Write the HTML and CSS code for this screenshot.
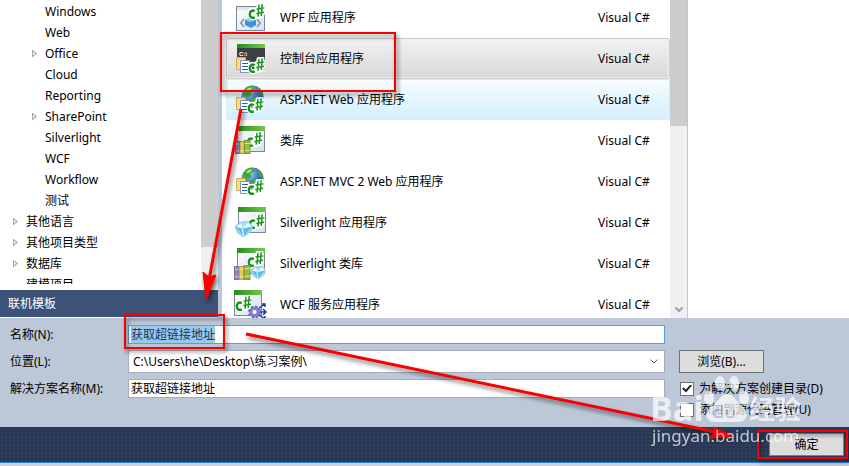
FILE: index.html
```html
<!DOCTYPE html>
<html lang="zh-CN">
<head>
    <meta charset="UTF-8">
    <meta name="viewport" content="width=device-width, initial-scale=1.0">
    <title>新建项目</title>
    <link rel="stylesheet" href="styles.css">
</head>
<body>
    <!-- shared icon parts -->
    <svg class="defs" width="0" height="0" aria-hidden="true">
        <defs>
            <linearGradient id="green" x1="0" x2="1"><stop offset="0" stop-color="#2a8c1c"/><stop offset="1" stop-color="#74c94a"/></linearGradient>
            <linearGradient id="pane" x1="0" y1="0" x2="1" y2="1"><stop offset="0" stop-color="#fff"/><stop offset="1" stop-color="#d5e0f0"/></linearGradient>
            <radialGradient id="earth" cx=".35" cy=".3" r=".8"><stop offset="0" stop-color="#a9d8f5"/><stop offset=".5" stop-color="#3a7cc8"/><stop offset="1" stop-color="#143c86"/></radialGradient>
            <symbol id="window" viewBox="0 0 28 26">
                <rect x=".5" y=".5" width="27" height="25" fill="url(#pane)" stroke="#7b8794"/>
                <rect width="28" height="5" fill="url(#green)"/>
            </symbol>
            <symbol id="csharp" viewBox="0 0 15 15">
                <g fill="none" stroke="#fff" stroke-width="4" stroke-linecap="round" stroke-linejoin="round"><path d="M6 7C3 5 1.500 7 1.500 9.500C1.500 13 4 13.500 6 12.500M9.500 2L8.500 12M12.500 1.500L11.500 11.500M7.500 5.500L14 4.500M7.500 9.500L14 8.500"/></g>
                <g fill="none" stroke="#16941b"><path stroke-width="2.200" d="M6 7.300C3.500 5.800 1.600 7.500 1.600 10C1.600 13 4 13.600 6 12.600"/><path stroke-width="1.300" d="M9.700 1.500L8.900 12M12.500 1L11.700 11.500M7.600 5.300L14.500 4.300M7.300 9.200L14.200 8.200"/></g>
            </symbol>
            <symbol id="pages" viewBox="0 0 14 16">
                <path d="M.5 .5H9.500V12.500H.5Z" fill="#f9dc86" stroke="#d5a943"/>
                <path d="M4.500 3.500H13.500V15.500H4.500Z" fill="#fff" stroke="#8094b8"/>
                <path d="M6 6.500H12M6 9.500H12M6 12.500H12" stroke="#3159a5"/>
            </symbol>
            <symbol id="books" viewBox="0 0 16 14">
                <rect x=".5" y="1.500" width="4" height="12" fill="#9a86c5" stroke="#7d6ba8"/>
                <rect x="5" y="1.500" width="4" height="12" fill="#eac95c" stroke="#c39d35"/>
                <rect x="9.500" y=".5" width="5.500" height="13" fill="#9bbc43" stroke="#769a30"/>
                <path d="M1 4H4M1 11H4M5 4H9M5 11H9M10 3.500H15M10 10.500H15" stroke="#fff" stroke-opacity=".6"/>
            </symbol>
            <symbol id="globe" viewBox="0 0 22 22">
                <circle cx="11" cy="11" r="10.500" fill="url(#earth)"/>
                <path d="M2 6C5 1 9 0 12 1L13 4L9 6L10 9L6 12L3 10Z M15 2C19 4 21 7 21 11L18 9L16 6Z M11 12L16 13L17 17L13 21L10 17Z" fill="#43a637"/>
                <path d="M5 5C7 2 10 2 11 3L7 6Z" fill="#a8e78b"/>
            </symbol>
            <symbol id="gem" viewBox="0 0 16 14">
                <path d="M1 5L5 1.500L12 1L15.500 5L14 9L8 13.500L3 10Z" fill="#a9ddf2" stroke="#8bcbe6"/>
                <path d="M1.500 5L7 6.500L15 5L8 13Z" fill="#60badf"/>
                <path d="M2 5L6 2L7 6.500ZM7 6.500L12 1.500L15 5Z" fill="#e6f8ff"/>
                <path d="M7 6.500L8 13" stroke="#e6f8ff"/>
            </symbol>
        </defs>
    </svg>

    <main class="dialog">
        <section class="browser">
            <aside class="sidebar">
                <div class="tree-pane">
                    <ul class="tree">
                        <li class="child">Windows</li>
                        <li class="child">Web</li>
                        <li class="child closed">Office</li>
                        <li class="child">Cloud</li>
                        <li class="child">Reporting</li>
                        <li class="child closed">SharePoint</li>
                        <li class="child">Silverlight</li>
                        <li class="child">WCF</li>
                        <li class="child">Workflow</li>
                        <li class="child">测试</li>
                        <li class="closed">其他语言</li>
                        <li class="closed">其他项目类型</li>
                        <li class="closed">数据库</li>
                        <li>建模项目</li>
                    </ul>
                    <div class="scrollbar"><div class="thumb tree-thumb"></div></div>
                </div>
                <div class="online">联机模板</div>
            </aside>

            <div class="list-pane">
                <ul class="templates">
                    <li>
                        <svg class="icon" viewBox="0 0 32 32" aria-hidden="true">
                            <rect x="1.500" y="4.500" width="28" height="24" fill="url(#pane)" stroke="#7b8794"/>
                            <rect x="2" y="5" width="27" height="3" fill="#dfe4e8"/>
                            <path d="M9 17L6 21L9 25M22 17L25 21L22 25" fill="none" stroke="#8fa0b0" stroke-width="2"/>
                            <path d="M10 18L15 16L21 18V23L16 26L10 23Z" fill="#3e91db"/><path d="M10 18L15 16L21 18L15 20Z" fill="#91c9f3"/>
                            <use href="#csharp" x="13" y="1" width="17" height="17"/>
                        </svg>
                        <span class="name">WPF 应用程序</span><span class="lang">Visual C#</span>
                    </li>
                    <li class="selected">
                        <svg class="icon" viewBox="0 0 32 32" aria-hidden="true">
                            <rect x="2" y="2" width="28" height="24" fill="#3c4043"/>
                            <rect x="2" y="1" width="28" height="4" fill="url(#green)"/>
                            <text x="4" y="13" class="prompt">C:\</text>
                            <use href="#pages" x="1" y="14" width="14" height="16"/>
                            <use href="#csharp" x="13" y="14" width="17" height="17"/>
                        </svg>
                        <span class="name">控制台应用程序</span><span class="lang">Visual C#</span>
                    </li>
                    <li class="hover">
                        <svg class="icon" viewBox="0 0 32 32" aria-hidden="true">
                            <use href="#globe" x="6" y="1" width="23" height="23"/>
                            <use href="#pages" x="1" y="13" width="14" height="16"/>
                            <use href="#csharp" x="12" y="13" width="17" height="17"/>
                        </svg>
                        <span class="name">ASP.NET Web 应用程序</span><span class="lang">Visual C#</span>
                    </li>
                    <li>
                        <svg class="icon" viewBox="0 0 32 32" aria-hidden="true">
                            <use href="#window" x="2" y="1" width="28" height="26"/>
                            <use href="#csharp" x="11" y="6" width="17" height="17"/>
                            <use href="#books" x="0" y="15" width="16" height="14"/>
                        </svg>
                        <span class="name">类库</span><span class="lang">Visual C#</span>
                    </li>
                    <li>
                        <svg class="icon" viewBox="0 0 32 32" aria-hidden="true">
                            <use href="#globe" x="6" y="1" width="23" height="23"/>
                            <use href="#pages" x="1" y="12" width="14" height="16"/>
                            <use href="#csharp" x="12" y="13" width="17" height="17"/>
                        </svg>
                        <span class="name">ASP.NET MVC 2 Web 应用程序</span><span class="lang">Visual C#</span>
                    </li>
                    <li>
                        <svg class="icon" viewBox="0 0 32 32" aria-hidden="true">
                            <use href="#window" x="3" y="0" width="28" height="26"/>
                            <use href="#csharp" x="13" y="6" width="17" height="17"/>
                            <use href="#gem" x="-1" y="13" width="19" height="18"/>
                        </svg>
                        <span class="name">Silverlight 应用程序</span><span class="lang">Visual C#</span>
                    </li>
                    <li>
                        <svg class="icon" viewBox="0 0 32 32" aria-hidden="true">
                            <use href="#window" x="2" y="0" width="28" height="26"/>
                            <use href="#csharp" x="12" y="3" width="17" height="17"/>
                            <use href="#books" x="-1" y="17" width="17" height="15"/>
                            <use href="#gem" x="15" y="17" width="16" height="15"/>
                        </svg>
                        <span class="name">Silverlight 类库</span><span class="lang">Visual C#</span>
                    </li>
                    <li>
                        <svg class="icon" viewBox="0 0 32 32" aria-hidden="true">
                            <use href="#window" x="-1" y="1" width="28" height="26"/>
                            <use href="#csharp" x="0" y="6" width="17" height="17"/>
                            <path d="M20 22L30 15M22 23H31M21 24L30 30M27 15H30V18M28 20L31 23L28 26M27 30H30V27" fill="none" stroke="#233a9e" stroke-width="1.500"/>
                            <circle cx="19.500" cy="23" r="5.500" fill="#8583cf" stroke="#6d6abb" stroke-width="2" stroke-dasharray="2.500 1.800"/>
                            <circle cx="19.500" cy="23" r="4.500" fill="#8583cf"/><circle cx="19.500" cy="23" r="2" fill="#fff"/>
                        </svg>
                        <span class="name">WCF 服务应用程序</span><span class="lang">Visual C#</span>
                    </li>
                </ul>
                <div class="scrollbar">
                    <div class="thumb list-thumb"></div>
                    <svg class="chevron" viewBox="0 0 8 5" aria-hidden="true"><path d="M.5 .5L4 4L7.500 .5"/></svg>
                </div>
            </div>
            <div class="details"></div>
        </section>

        <form class="settings">
            <div class="fields">
                <label for="name">名称(N):</label>
                <div class="box focused"><input id="name" type="text" value="获取超链接地址"></div>
                <label for="location">位置(L):</label>
                <div class="box combo">
                    <select id="location"><option>C:\Users\he\Desktop\练习案例\</option></select>
                    <svg class="chevron dark" viewBox="0 0 8 5" aria-hidden="true"><path d="M.5 .5L4 4L7.500 .5"/></svg>
                </div>
                <label for="solution">解决方案名称(M):</label>
                <div class="box"><input id="solution" type="text" value="获取超链接地址"></div>
            </div>
            <div class="options">
                <button type="button" class="browse">浏览(B)...</button>
                <label class="check"><input type="checkbox" checked>为解决方案创建目录(D)</label>
                <label class="check"><input type="checkbox">添加到源代码管理(U)</label>
            </div>
        </form>

        <footer class="actions"><button type="button" class="ok">确定</button></footer>
    </main>
    <div class="behind"></div>

    <!-- watermark and red marks lie over the dialog -->
    <svg class="overlay" width="849" height="466" viewBox="0 0 849 466" aria-hidden="true">
        <defs><filter id="shadow" x="-20%" y="-20%" width="140%" height="140%"><feDropShadow dx="2" dy="3" stdDeviation="2" flood-color="#000" flood-opacity=".55"/></filter></defs>
        <g class="marks" filter="url(#shadow)">
            <rect x="221" y="33" width="174" height="58"/>
            <rect x="125" y="315" width="99" height="33"/>
            <rect x="758" y="431" width="89" height="27"/>
            <path d="M241 109L209 280M246 334L716 432"/>
            <path class="head" d="M206 300L203 272L209 277L216 275Z"/>
            <path class="head" d="M733 436L713 427L715 432L710 438Z"/>
        </g>
        <g class="watermark">
            <text x="650" y="421" class="logo">Bai</text>
            <ellipse cx="709" cy="398" rx="5" ry="7"/>
            <ellipse cx="720" cy="383" rx="5" ry="7"/>
            <ellipse cx="734" cy="383" rx="5" ry="7"/>
            <ellipse cx="744" cy="398" rx="5" ry="7"/>
            <path d="M727 394C721 394 719 401 711 407C703 413 706 422 715 422H738C748 422 750 412 742 406C735 400 734 394 727 394Z"/>
            <path class="du" d="M722 405V417H717C713 417 713 410 717 410H722M727 410V415C727 418 734 418 734 415V410"/>
            <text x="749" y="419" class="cn">经验</text>
            <text x="652" y="442" class="site">jingyan.baidu.com</text>
        </g>
    </svg>
</body>
</html>
```

FILE: styles.css
```css
* {
    box-sizing: border-box;
}
body {
    margin: 0;
    min-height: 100vh;
    display: flex;
    flex-direction: column;
    position: relative;
    overflow: hidden;
    background-color: #fff;
    color: #000;
    font-family: "Noto Sans", "Noto Sans CJK SC", sans-serif;
    font-size: 12px;
    line-height: 20px;
}
ul {
    list-style: none;
    margin: 0;
    padding: 0;
}
input, select, button {
    font: inherit;
    color: inherit;
}
.defs {
    position: absolute;
}

/* template browser */
.browser {
    display: flex;
    height: 318px;
    overflow: hidden;
}
.sidebar {
    flex: 0 0 218px;
    display: flex;
    flex-direction: column;
    border-bottom: 1px solid #fff;
}
.tree-pane {
    flex: 1;
    display: flex;
    min-height: 0;
}
.tree {
    flex: 1;
    overflow: hidden;
    padding-top: 1px;
    margin-bottom: 6px;
}
.tree li {
    height: 21px;
    line-height: 21px;
    padding-left: 26px;
    display: flex;
    align-items: center;
}
.tree .child {
    padding-left: 45px;
}
.closed::before {
    content: "";
    width: 5px;
    height: 8px;
    margin-left: -13px;
    margin-right: 8px;
    background-color: #a6a6a6;
    clip-path: polygon(0 0, 100% 50%, 0 100%, 0 0, 1px 2px, 1px 6px, 3px 4px, 1px 2px);
}
.scrollbar {
    width: 17px;
    background-color: #f0f0f0;
    display: flex;
    flex-direction: column;
    justify-content: space-between;
    align-items: center;
}
.thumb {
    width: 100%;
    background-color: #cdcdcd;
}
.tree-thumb {
    height: 247px;
}
.list-thumb {
    height: 126px;
}
.online {
    height: 27px;
    line-height: 27px;
    padding-left: 8px;
    background-color: #3d5277;
    color: #fff;
}
.list-pane {
    flex: 0 0 470px;
    display: flex;
    border-left: 4px solid #bcc7d8;
    border-right: 1px solid #bcc7d8;
}
.templates {
    flex: 1;
    margin-top: -3px;
    padding-left: 4px;
}
.templates li {
    height: 41px;
    display: flex;
    align-items: center;
    padding-left: 8px;
    border: 1px solid transparent;
    border-radius: 2px;
}
.templates .selected {
    background: linear-gradient(#f2f2f2, #d9d9d9);
    border-color: #ccc;
    box-shadow: inset 0 0 0 1px #eee;
}
.templates .hover {
    background: linear-gradient(#f7fcff, #d3effc);
    border-color: #d3effc;
}
.icon {
    width: 32px;
    height: 32px;
    margin-right: 13px;
    overflow: visible;
}
.prompt {
    font: bold 6px "Liberation Sans", sans-serif;
    fill: #fff;
}
.name {
    flex: 1;
}
.lang {
    width: 71px;
}
.chevron {
    width: 8px;
    height: 5px;
    margin-bottom: 6px;
    overflow: visible;
    fill: none;
    stroke: #a0a0a0;
    stroke-width: 2;
}
.details {
    flex: 1;
}

/* project settings */
.settings {
    display: flex;
    height: 109px;
    padding: 7px 0 0 10px;
    background-color: #bcc7d8;
}
.fields {
    flex: 1;
    display: grid;
    grid-template-columns: 118px 1fr;
    grid-template-rows: 19px 23px 19px;
    align-content: start;
    align-items: center;
    row-gap: 6px;
}
.box {
    height: 100%;
    display: flex;
    align-items: center;
    background-color: #fff;
    border: 1px solid #a7adb8;
    padding: 0 2px;
}
.box input {
    width: 100%;
    height: 17px;
    border: 0;
    padding: 0;
    background: none;
    outline: none;
}
.focused {
    border-color: #569de5;
}
.focused input {
    background: linear-gradient(#99c9ef, #99c9ef) no-repeat 0 0 / 84px 100%;
    color: #15395c;
}
.combo select {
    flex: 1;
    appearance: none;
    border: 0;
    padding: 0 2px;
    background: none;
    outline: none;
}
.dark {
    margin: 0 4px 0 0;
    stroke: #606060;
    stroke-width: 1;
}
.options {
    width: 184px;
    padding: 25px 0 0 14px;
    display: flex;
    flex-direction: column;
    align-items: flex-start;
}
.browse {
    width: 85px;
    height: 23px;
    margin-bottom: 5px;
    padding: 0;
    line-height: 21px;
    background-color: #ddd;
    border: 1px solid #707070;
}
.check {
    height: 21px;
    display: flex;
    align-items: center;
    gap: 5px;
    padding-left: 1px;
}
.check input {
    appearance: none;
    width: 14px;
    height: 14px;
    margin: 0;
    border: 1px solid #707070;
    background-color: #fff;
    display: grid;
    place-items: center;
}
.check input:checked::before {
    content: "";
    width: 10px;
    height: 8px;
    background-color: #212121;
    clip-path: polygon(0 50%, 15% 35%, 38% 62%, 85% 0, 100% 12%, 40% 100%);
}

/* bottom bar */
.actions {
    height: 36px;
    padding-right: 5px;
    display: flex;
    justify-content: flex-end;
    align-items: center;
    background: radial-gradient(#30425f 1px, transparent 1px) 0 0 / 4px 4px, #293955;
    border-bottom: 1px solid #2a80d8;
}
.ok {
    width: 75px;
    height: 23px;
    padding: 0;
    background-color: #ddd;
    border: 1px solid #3c8fdf;
}
.behind {
    flex: 1;
    background-color: #cdd2da;
}

.overlay {
    position: absolute;
    top: 0;
    left: 0;
    pointer-events: none;
}
.watermark {
    fill: #fff;
    opacity: .7;
}
.logo {
    font: bold 34px "Open Sans", sans-serif;
}
.cn {
    font: bold 26px "Noto Sans CJK SC", sans-serif;
}
.site {
    font: 17px "Noto Sans", sans-serif;
}
.du {
    fill: none;
    stroke: #bcc7d8;
    stroke-width: 2;
}
.marks {
    fill: none;
    stroke: #f80000;
    stroke-width: 2;
}
.marks path {
    stroke-width: 3;
}
.marks .head {
    fill: #f80000;
    stroke-width: 1;
}
```
